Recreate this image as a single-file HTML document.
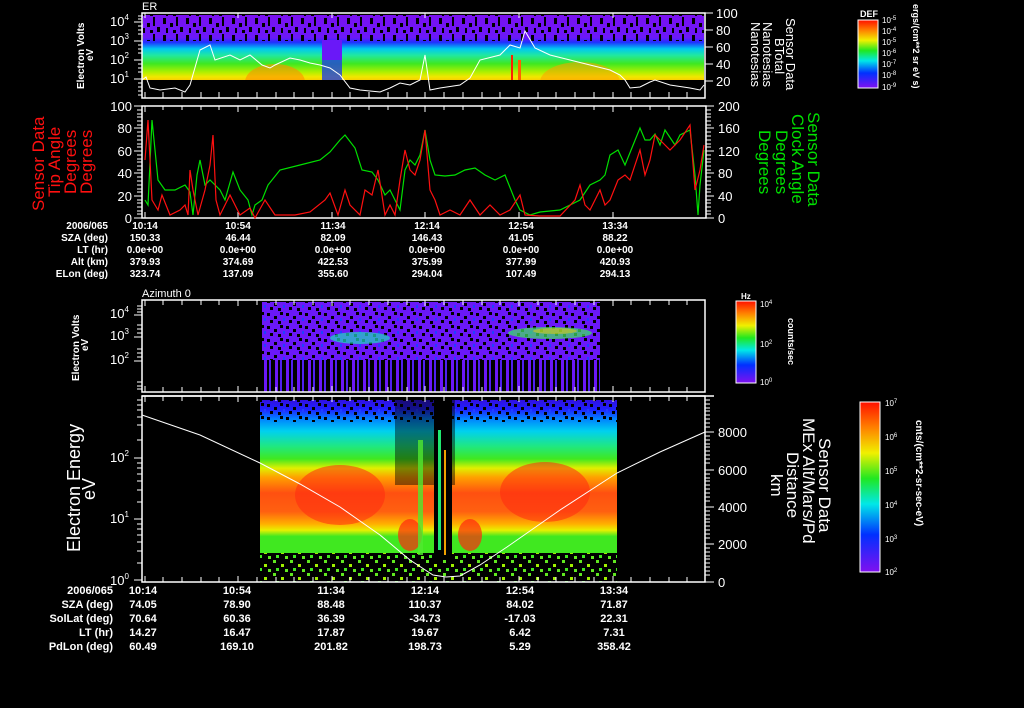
<!DOCTYPE html>
<html><head><meta charset="utf-8"><style>
html,body{margin:0;padding:0;background:#000;}
svg{display:block}
text{font-family:"Liberation Sans",sans-serif;fill:#fff;}
</style></head><body>
<svg width="1024" height="708" viewBox="0 0 1024 708" xmlns="http://www.w3.org/2000/svg">
<defs>
<clipPath id="c1"><rect x="142" y="15" width="562" height="65"/></clipPath>
<clipPath id="c4"><rect x="260" y="400" width="357" height="155"/></clipPath>
<linearGradient id="g1" x1="0" y1="0" x2="0" y2="1">
<stop offset="0" stop-color="#7a10f0"/><stop offset="0.35" stop-color="#6a18f8"/><stop offset="0.42" stop-color="#2030ff"/><stop offset="0.52" stop-color="#00c8f0"/><stop offset="0.62" stop-color="#20e8a0"/><stop offset="0.75" stop-color="#40e820"/><stop offset="0.88" stop-color="#b0f000"/><stop offset="0.95" stop-color="#f0e800"/><stop offset="1" stop-color="#f8d000"/></linearGradient>
<linearGradient id="g4" x1="0" y1="0" x2="0" y2="1">
<stop offset="0" stop-color="#3010e0"/><stop offset="0.06" stop-color="#2020ff"/><stop offset="0.12" stop-color="#0080ff"/><stop offset="0.2" stop-color="#00d0f0"/><stop offset="0.3" stop-color="#20e880"/><stop offset="0.38" stop-color="#40e820"/><stop offset="0.44" stop-color="#e0f000"/><stop offset="0.5" stop-color="#ffa000"/><stop offset="0.6" stop-color="#ff5010"/><stop offset="0.72" stop-color="#ff6010"/><stop offset="0.8" stop-color="#ffb000"/><stop offset="0.84" stop-color="#e8f000"/><stop offset="0.88" stop-color="#40e820"/><stop offset="1" stop-color="#40e820"/></linearGradient>
<linearGradient id="cb" x1="0" y1="0" x2="0" y2="1">
<stop offset="0" stop-color="#ff1000"/><stop offset="0.15" stop-color="#ff8000"/><stop offset="0.3" stop-color="#f0f000"/><stop offset="0.45" stop-color="#20e820"/><stop offset="0.6" stop-color="#00e8e8"/><stop offset="0.78" stop-color="#0030ff"/><stop offset="1" stop-color="#8010f0"/></linearGradient>
<pattern id="noise" width="23" height="17" patternUnits="userSpaceOnUse">
<rect x="2" y="1" width="3" height="6" fill="#000"/><rect x="9" y="6" width="3" height="4" fill="#000"/><rect x="15" y="0" width="2" height="9" fill="#000"/><rect x="19" y="10" width="3" height="5" fill="#000"/><rect x="5" y="11" width="2" height="5" fill="#000"/><rect x="12" y="13" width="3" height="3" fill="#000"/></pattern>
<pattern id="noise2" width="19" height="13" patternUnits="userSpaceOnUse">
<rect x="1" y="1" width="3" height="3" fill="#000"/><rect x="8" y="4" width="3" height="3" fill="#000"/><rect x="14" y="0" width="3" height="3" fill="#000"/><rect x="4" y="8" width="3" height="3" fill="#000"/><rect x="12" y="9" width="3" height="3" fill="#000"/><rect x="17" y="6" width="2" height="3" fill="#2040ff"/></pattern>
<pattern id="bars" width="11" height="40" patternUnits="userSpaceOnUse">
<rect x="0" y="0" width="3" height="40" fill="#6a18f8"/><rect x="5" y="0" width="2" height="40" fill="#5020f0"/></pattern>
<pattern id="dots" width="17" height="13" patternUnits="userSpaceOnUse">
<rect x="1" y="1" width="3" height="3" fill="#60e820"/><rect x="9" y="5" width="3" height="3" fill="#a0f000"/><rect x="4" y="9" width="3" height="3" fill="#40e820"/><rect x="13" y="10" width="3" height="3" fill="#60e820"/></pattern>
</defs>

<!-- Panel 1 -->
<rect x="142" y="15" width="562" height="65" fill="url(#g1)"/>
<rect x="142" y="15" width="562" height="26" fill="url(#noise)"/>
<g clip-path="url(#c1)">
<rect x="322" y="40" width="20" height="40" fill="#2040e0" opacity="0.8"/>
<rect x="322" y="40" width="20" height="20" fill="#6a18f8"/>
<ellipse cx="275" cy="82" rx="30" ry="18" fill="#ff9000" opacity="0.6"/>
<ellipse cx="580" cy="82" rx="40" ry="20" fill="#ffa000" opacity="0.55"/>
</g>
<rect x="511" y="55" width="2" height="25" fill="#ff2000"/><rect x="518" y="60" width="3" height="20" fill="#ff6000"/>
<rect x="142" y="13" width="563" height="85" fill="none" stroke="#fff" stroke-width="1.5"/>
<polyline fill="none" stroke="#fff" stroke-width="1" points="142,80 146,77 150,88 160,90 175,88 185,92 190,85 200,50 210,45 215,60 230,55 240,60 250,55 262,65 270,68 275,65 290,58 300,60 310,63 320,65 330,68 340,75 350,88 360,90 380,92 390,88 400,83 410,85 420,80 425,55 430,90 440,88 460,85 470,78 480,60 500,55 510,45 520,48 525,31 535,48 550,55 570,60 590,65 610,70 620,75 625,80 630,88 640,87 650,82 655,80 670,85 690,88 700,90 704,85"/>
<g stroke="#fff" stroke-width="1">
<path d="M145,98v-6M163,98v-6M182,98v-6M201,98v-6M219,98v-6M238,98v-6M257,98v-6M276,98v-6M294,98v-6M313,98v-6M332,98v-6M350,98v-6M369,98v-6M388,98v-6M407,98v-6M425,98v-6M444,98v-6M463,98v-6M482,98v-6M500,98v-6M519,98v-6M538,98v-6M556,98v-6M575,98v-6M594,98v-6M613,98v-6M631,98v-6M650,98v-6M669,98v-6M687,98v-6"/>
<path d="M145,13v5M238,13v5M332,13v5M425,13v5M519,13v5M613,13v5"/>
<path d="M134,22h8M134,41h8M134,60h8M134,79h8M138,16h4M138,19h4M138,26h4M138,30h4M138,34h4M138,45h4M138,49h4M138,53h4M138,64h4M138,68h4M138,72h4M138,83h4M138,87h4M138,91h4M138,95h4"/>
<path d="M705,13h8M705,30h8M705,47h8M705,64h8M705,81h8"/>
</g>
<text x="142" y="10" font-size="11">ER</text>
<g font-size="13" text-anchor="start"><text x="110" y="26">10<tspan font-size="8" dy="-6">4</tspan></text><text x="110" y="45">10<tspan font-size="8" dy="-6">3</tspan></text><text x="110" y="64">10<tspan font-size="8" dy="-6">2</tspan></text><text x="110" y="83">10<tspan font-size="8" dy="-6">1</tspan></text></g>
<g font-size="13"><text x="716" y="18">100</text><text x="716" y="35">80</text><text x="716" y="52">60</text><text x="716" y="69">40</text><text x="716" y="86">20</text></g>
<g font-size="10" font-weight="bold" transform="translate(84,89) rotate(-90)"><text x="0" y="0">Electron Volts</text><text x="28" y="9">eV</text></g>
<g font-size="13" transform="translate(786,18) rotate(90)"><text x="0" y="0">Sensor Data</text><text x="20" y="11">BTotal</text><text x="4" y="23">Nanotesias</text><text x="4" y="35">Nanotesias</text></g>

<!-- colorbar 1 -->
<rect x="858" y="20" width="20" height="68" fill="url(#cb)" stroke="#fff" stroke-width="1"/>
<text x="860" y="17" font-size="9" font-weight="bold">DEF</text>
<g font-size="8"><text x="882" y="23">10<tspan dy="-3" font-size="6">-5</tspan></text><text x="882" y="34">10<tspan dy="-3" font-size="6">-4</tspan></text><text x="882" y="45">10<tspan dy="-3" font-size="6">-5</tspan></text><text x="882" y="56">10<tspan dy="-3" font-size="6">-6</tspan></text><text x="882" y="67">10<tspan dy="-3" font-size="6">-7</tspan></text><text x="882" y="78">10<tspan dy="-3" font-size="6">-8</tspan></text><text x="882" y="90">10<tspan dy="-3" font-size="6">-9</tspan></text></g>
<text font-size="9" font-weight="bold" transform="translate(913,4) rotate(90)">ergs/(cm**2 sr eV s)</text>

<!-- Panel 2 -->
<rect x="142" y="106" width="564" height="112" fill="none" stroke="#fff" stroke-width="1.5"/>
<g stroke="#fff" stroke-width="1">
<path d="M145,106v6M163,106v4M182,106v4M201,106v4M219,106v4M238,106v6M257,106v4M276,106v4M294,106v4M313,106v4M332,106v6M350,106v4M369,106v4M388,106v4M407,106v4M425,106v6M444,106v4M463,106v4M482,106v4M500,106v4M519,106v6M538,106v4M556,106v4M575,106v4M594,106v4M613,106v6M631,106v4M650,106v4M669,106v4M687,106v4"/>
<path d="M134,106h8M134,128h8M134,151h8M134,173h8M134,196h8M134,218h8"/>
<path d="M137,110h5M137,114h5M137,117h5M137,121h5M137,125h5M137,132h5M137,136h5M137,140h5M137,144h5M137,147h5M137,155h5M137,159h5M137,162h5M137,166h5M137,170h5M137,177h5M137,181h5M137,185h5M137,189h5M137,192h5M137,200h5M137,203h5M137,207h5M137,211h5M137,214h5"/>
<path d="M706,106h8M706,128h8M706,151h8M706,173h8M706,196h8M706,218h8"/>
<path d="M706,110h5M706,114h5M706,117h5M706,121h5M706,125h5M706,132h5M706,136h5M706,140h5M706,144h5M706,147h5M706,155h5M706,159h5M706,162h5M706,166h5M706,170h5M706,177h5M706,181h5M706,185h5M706,189h5M706,192h5M706,200h5M706,203h5M706,207h5M706,211h5M706,214h5"/>
<path d="M145,218v-6M238,218v-6M332,218v-6M425,218v-6M519,218v-6M613,218v-6"/>
</g>
<polyline fill="none" stroke="#00e000" stroke-width="1.2" points="145,200 148,205 152,120 158,180 165,190 175,190 185,185 190,192 193,215 197,175 200,160 205,185 210,180 220,190 225,200 233,172 240,190 248,200 252,215 255,205 262,200 268,185 280,170 300,165 320,160 330,152 340,140 345,135 355,148 362,170 372,172 378,180 385,195 390,190 395,200 400,210 405,170 410,160 415,165 420,155 425,130 430,160 435,175 445,176 455,175 465,170 475,168 485,175 495,180 505,175 515,200 520,210 530,215 540,212 560,210 580,200 590,185 600,180 605,175 610,155 618,150 625,165 640,128 645,140 650,140 655,134 660,145 665,130 675,145 680,135 690,130 695,175 698,215 700,185 704,150"/>
<polyline fill="none" stroke="#ff1010" stroke-width="1.2" points="145,160 148,120 152,200 158,210 162,195 170,215 180,210 185,205 188,215 190,170 193,190 198,215 205,190 210,165 213,135 216,200 220,215 230,195 240,215 250,208 255,218 265,200 275,215 295,215 310,212 325,200 330,193 338,215 345,190 350,205 360,215 365,190 372,195 378,170 385,215 390,205 395,215 400,180 405,150 410,170 415,175 420,160 425,130 430,190 435,200 440,215 450,210 460,215 470,200 480,215 490,205 500,215 510,210 520,195 525,215 540,216 560,216 575,200 580,185 585,205 590,210 600,190 605,205 610,200 618,180 625,175 630,180 640,150 645,175 650,160 655,135 660,140 670,150 680,140 690,125 695,190 700,170 704,145"/>
<g font-size="13" text-anchor="end"><text x="132" y="111">100</text><text x="132" y="133">80</text><text x="132" y="156">60</text><text x="132" y="178">40</text><text x="132" y="201">20</text><text x="132" y="223">0</text></g>
<g font-size="13"><text x="718" y="111">200</text><text x="718" y="133">160</text><text x="718" y="156">120</text><text x="718" y="178">80</text><text x="718" y="201">40</text><text x="718" y="223">0</text></g>
<g font-size="17" transform="rotate(-90)"><text x="-211" y="44" style="fill:#ff1010">Sensor Data</text><text x="-197" y="60" style="fill:#ff1010">Tip Angle</text><text x="-194" y="76" style="fill:#ff1010">Degrees</text><text x="-194" y="92" style="fill:#ff1010">Degrees</text></g>
<g font-size="17" transform="rotate(90)"><text x="112" y="-808" style="fill:#00e000">Sensor Data</text><text x="114" y="-792" style="fill:#00e000">Clock Angle</text><text x="130" y="-776" style="fill:#00e000">Degrees</text><text x="130" y="-759" style="fill:#00e000">Degrees</text></g>

<!-- table 1 -->
<g font-size="10" font-weight="bold" text-anchor="end"><text x="108" y="229">2006/065</text><text x="108" y="241">SZA (deg)</text><text x="108" y="253">LT (hr)</text><text x="108" y="265">Alt (km)</text><text x="108" y="277">ELon (deg)</text></g>
<g font-size="10" font-weight="bold" text-anchor="middle">
<text x="145" y="229">10:14</text><text x="145" y="241">150.33</text><text x="145" y="253">0.0e+00</text><text x="145" y="265">379.93</text><text x="145" y="277">323.74</text>
<text x="238" y="229">10:54</text><text x="238" y="241">46.44</text><text x="238" y="253">0.0e+00</text><text x="238" y="265">374.69</text><text x="238" y="277">137.09</text>
<text x="333" y="229">11:34</text><text x="333" y="241">82.09</text><text x="333" y="253">0.0e+00</text><text x="333" y="265">422.53</text><text x="333" y="277">355.60</text>
<text x="427" y="229">12:14</text><text x="427" y="241">146.43</text><text x="427" y="253">0.0e+00</text><text x="427" y="265">375.99</text><text x="427" y="277">294.04</text>
<text x="521" y="229">12:54</text><text x="521" y="241">41.05</text><text x="521" y="253">0.0e+00</text><text x="521" y="265">377.99</text><text x="521" y="277">107.49</text>
<text x="615" y="229">13:34</text><text x="615" y="241">88.22</text><text x="615" y="253">0.0e+00</text><text x="615" y="265">420.93</text><text x="615" y="277">294.13</text></g>

<text x="142" y="297" font-size="11">Azimuth 0</text>

<!-- Panel 3 -->
<rect x="262" y="302" width="338" height="58" fill="#6a18f8"/>
<rect x="262" y="302" width="338" height="58" fill="url(#noise2)"/>
<rect x="262" y="360" width="338" height="32" fill="url(#bars)"/>
<ellipse cx="360" cy="338" rx="30" ry="6" fill="#20d8c0" opacity="0.7"/>
<ellipse cx="550" cy="333" rx="42" ry="6" fill="#40e860" opacity="0.7"/>
<ellipse cx="555" cy="331" rx="22" ry="3" fill="#f0d000" opacity="0.5"/>
<rect x="142" y="300" width="563" height="92" fill="none" stroke="#fff" stroke-width="1.5"/>
<g stroke="#fff" stroke-width="1">
<path d="M145,300v6M163,300v5M182,300v5M201,300v5M219,300v5M238,300v6M257,300v5M276,300v5M294,300v5M313,300v5M332,300v6M350,300v5M369,300v5M388,300v5M407,300v5M425,300v6M444,300v5M463,300v5M482,300v5M500,300v5M519,300v6M538,300v5M556,300v5M575,300v5M594,300v5M613,300v6M631,300v5M650,300v5M669,300v5M687,300v5"/>
<path d="M145,392v-6M163,392v-5M182,392v-5M201,392v-5M219,392v-5M238,392v-6M257,392v-5M276,392v-5M294,392v-5M313,392v-5M332,392v-6M350,392v-5M369,392v-5M388,392v-5M407,392v-5M425,392v-6M444,392v-5M463,392v-5M482,392v-5M500,392v-5M519,392v-6M538,392v-5M556,392v-5M575,392v-5M594,392v-5M613,392v-6M631,392v-5M650,392v-5M669,392v-5M687,392v-5"/>
<path d="M134,315h8M134,337h8M134,361h8M137,306h5M137,309h5M137,312h5M137,325h5M137,329h5M137,333h5M137,349h5M137,353h5M137,357h5M137,382h5M137,386h5M137,389h5"/>
</g>
<g font-size="13"><text x="110" y="318">10<tspan font-size="8" dy="-6">4</tspan></text><text x="110" y="340">10<tspan font-size="8" dy="-6">3</tspan></text><text x="110" y="364">10<tspan font-size="8" dy="-6">2</tspan></text></g>
<g font-size="10" font-weight="bold" transform="translate(79,381) rotate(-90)"><text x="0" y="0">Electron Volts</text><text x="30" y="9">eV</text></g>
<rect x="736" y="301" width="20" height="82" fill="url(#cb)" stroke="#fff" stroke-width="1"/>
<text x="741" y="299" font-size="8" font-weight="bold">Hz</text>
<g font-size="8"><text x="760" y="307">10<tspan dy="-3" font-size="6">4</tspan></text><text x="760" y="347">10<tspan dy="-3" font-size="6">2</tspan></text><text x="760" y="385">10<tspan dy="-3" font-size="6">0</tspan></text></g>
<text font-size="9" font-weight="bold" transform="translate(788,318) rotate(90)">counts/sec</text>

<!-- Panel 4 -->
<rect x="260" y="400" width="357" height="155" fill="url(#g4)"/>
<rect x="260" y="400" width="357" height="22" fill="url(#noise2)"/>
<g clip-path="url(#c4)">
<ellipse cx="340" cy="495" rx="45" ry="30" fill="#ff2a10" opacity="0.55"/>
<ellipse cx="545" cy="492" rx="45" ry="30" fill="#ff2a10" opacity="0.55"/>
<rect x="395" y="400" width="60" height="85" fill="#000" opacity="0.45"/>
<ellipse cx="410" cy="535" rx="12" ry="16" fill="#ff2a10" opacity="0.7"/>
<ellipse cx="470" cy="535" rx="12" ry="16" fill="#ff2a10" opacity="0.7"/>
</g>
<rect x="260" y="553" width="357" height="29" fill="#000"/>
<rect x="260" y="553" width="357" height="29" fill="url(#dots)"/>
<rect x="434" y="400" width="18" height="160" fill="#000"/>
<rect x="438" y="430" width="3" height="120" fill="#20e870"/><rect x="444" y="450" width="2" height="105" fill="#f0a000"/>
<rect x="418" y="440" width="5" height="115" fill="#50e830" opacity="0.8"/>
<rect x="142" y="396" width="563" height="186" fill="none" stroke="#fff" stroke-width="1.5"/>
<path d="M142,396h572" stroke="#fff" stroke-width="1.5"/>
<polyline fill="none" stroke="#fff" stroke-width="1" points="142,415 200,435 260,463 300,484 340,507 380,535 410,560 433,575 446,577 460,576 480,565 507,547 560,510 617,473 660,452 705,432"/>
<g stroke="#fff" stroke-width="1">
<path d="M145,396v6M163,396v5M182,396v5M201,396v5M219,396v5M238,396v6M257,396v5M276,396v5M294,396v5M313,396v5M332,396v6M350,396v5M369,396v5M388,396v5M407,396v5M425,396v6M444,396v5M463,396v5M482,396v5M500,396v5M519,396v6M538,396v5M556,396v5M575,396v5M594,396v5M613,396v6M631,396v5M650,396v5M669,396v5M687,396v5"/>
<path d="M145,582v-6M163,582v-5M182,582v-5M201,582v-5M219,582v-5M238,582v-6M257,582v-5M276,582v-5M294,582v-5M313,582v-5M332,582v-6M350,582v-5M369,582v-5M388,582v-5M407,582v-5M425,582v-6M444,582v-5M463,582v-5M482,582v-5M500,582v-5M519,582v-6M538,582v-5M556,582v-5M575,582v-5M594,582v-5M613,582v-6M631,582v-5M650,582v-5M669,582v-5M687,582v-5"/>
<path d="M134,458h8M134,519h8M134,580h8M137,400h5M137,405h5M137,410h5M137,417h5M137,425h5M137,440h5M137,463h5M137,468h5M137,474h5M137,481h5M137,490h5M137,502h5M137,524h5M137,529h5M137,535h5M137,542h5M137,551h5M137,563h5"/>
<path d="M705,432h9M705,470h9M705,507h9M705,544h9M705,582h9"/>
<path d="M705,400h5M705,404h5M705,408h5M705,411h5M705,415h5M705,419h5M705,423h5M705,427h5M705,436h5M705,440h5M705,444h5M705,447h5M705,451h5M705,455h5M705,459h5M705,463h5M705,474h5M705,478h5M705,481h5M705,485h5M705,489h5M705,493h5M705,497h5M705,501h5M705,511h5M705,515h5M705,519h5M705,522h5M705,526h5M705,530h5M705,534h5M705,538h5M705,548h5M705,552h5M705,556h5M705,559h5M705,563h5M705,567h5M705,571h5M705,575h5"/>
</g>
<g font-size="13"><text x="110" y="462">10<tspan font-size="8" dy="-6">2</tspan></text><text x="110" y="523">10<tspan font-size="8" dy="-6">1</tspan></text><text x="110" y="585">10<tspan font-size="8" dy="-6">0</tspan></text></g>
<g font-size="13"><text x="718" y="437">8000</text><text x="718" y="475">6000</text><text x="718" y="512">4000</text><text x="718" y="549">2000</text><text x="718" y="587">0</text></g>
<g font-size="18" transform="translate(80,552) rotate(-90)"><text x="0" y="0">Electron Energy</text><text x="52" y="15">eV</text></g>
<g font-size="17" transform="rotate(90)"><text x="438" y="-819">Sensor Data</text><text x="418" y="-803">MEx Alt/Mars/Pd</text><text x="452" y="-787">Distance</text><text x="474" y="-771">km</text></g>
<rect x="860" y="402" width="20" height="170" fill="url(#cb)" stroke="#fff" stroke-width="1"/>
<g font-size="8"><text x="885" y="406">10<tspan dy="-3" font-size="6">7</tspan></text><text x="885" y="440">10<tspan dy="-3" font-size="6">6</tspan></text><text x="885" y="474">10<tspan dy="-3" font-size="6">5</tspan></text><text x="885" y="508">10<tspan dy="-3" font-size="6">4</tspan></text><text x="885" y="542">10<tspan dy="-3" font-size="6">3</tspan></text><text x="885" y="575">10<tspan dy="-3" font-size="6">2</tspan></text></g>
<text font-size="10" font-weight="bold" transform="translate(916,420) rotate(90)">cnts/(cm**2-sr-sec-eV)</text>

<!-- table 2 -->
<g font-size="11" font-weight="bold" text-anchor="end"><text x="113" y="594">2006/065</text><text x="113" y="608">SZA (deg)</text><text x="113" y="622">SolLat (deg)</text><text x="113" y="636">LT (hr)</text><text x="113" y="650">PdLon (deg)</text></g>
<g font-size="11" font-weight="bold" text-anchor="middle">
<text x="143" y="594">10:14</text><text x="143" y="608">74.05</text><text x="143" y="622">70.64</text><text x="143" y="636">14.27</text><text x="143" y="650">60.49</text>
<text x="237" y="594">10:54</text><text x="237" y="608">78.90</text><text x="237" y="622">60.36</text><text x="237" y="636">16.47</text><text x="237" y="650">169.10</text>
<text x="331" y="594">11:34</text><text x="331" y="608">88.48</text><text x="331" y="622">36.39</text><text x="331" y="636">17.87</text><text x="331" y="650">201.82</text>
<text x="425" y="594">12:14</text><text x="425" y="608">110.37</text><text x="425" y="622">-34.73</text><text x="425" y="636">19.67</text><text x="425" y="650">198.73</text>
<text x="520" y="594">12:54</text><text x="520" y="608">84.02</text><text x="520" y="622">-17.03</text><text x="520" y="636">6.42</text><text x="520" y="650">5.29</text>
<text x="614" y="594">13:34</text><text x="614" y="608">71.87</text><text x="614" y="622">22.31</text><text x="614" y="636">7.31</text><text x="614" y="650">358.42</text></g>
</svg>
</body></html>
